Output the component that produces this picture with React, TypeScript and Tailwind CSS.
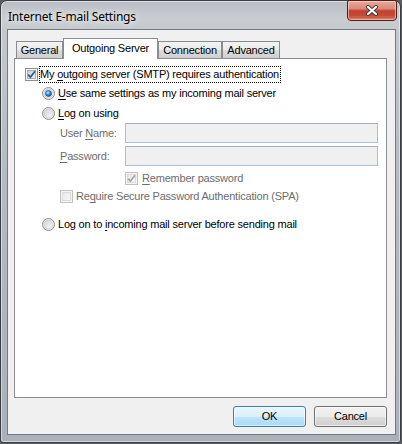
import React, { useId } from "react";

function Checkbox({ checked, disabled }: { checked?: boolean; disabled?: boolean }) {
  const id = useId().replace(/:/g, "");
  return (
    <svg width="13" height="13" viewBox="0 0 13 13" className="shrink-0 block">
      <defs>
        <linearGradient id={`cg${id}`} x1="0" y1="0" x2="1" y2="1">
          <stop offset="0" stopColor={disabled ? "#e6e6e6" : "#c5cad1"} />
          <stop offset="1" stopColor={disabled ? "#f9f9f9" : "#f7f7f8"} />
        </linearGradient>
      </defs>
      <rect x="0.5" y="0.5" width="12" height="12" fill="#f4f4f4" stroke={disabled ? "#c2c2c2" : "#8e8f8f"} />
      <rect x="2.5" y="2.5" width="8" height="8" fill={`url(#cg${id})`} stroke={disabled ? "#dcdcdc" : "#a7acb3"} />
      {checked && (
        <path
          d="M3.2 6.6 L5.4 9.2 L10 3.2"
          fill="none"
          stroke={disabled ? "#a6a6a6" : "#3c5a8e"}
          strokeWidth="1.8"
          strokeLinejoin="round"
        />
      )}
    </svg>
  );
}

function Radio({ checked }: { checked?: boolean }) {
  const id = useId().replace(/:/g, "");
  return (
    <svg width="13" height="13" viewBox="0 0 13 13" className="shrink-0 block">
      <defs>
        <linearGradient id={`rg${id}`} x1="0" y1="0" x2="1" y2="1">
          <stop offset="0" stopColor="#cfd1d4" />
          <stop offset="1" stopColor="#fbfbfb" />
        </linearGradient>
        <radialGradient id={`rd${id}`} cx="0.4" cy="0.35" r="0.7">
          <stop offset="0" stopColor="#c4ecff" />
          <stop offset="0.45" stopColor="#3f9ae0" />
          <stop offset="1" stopColor="#0d3f78" />
        </radialGradient>
      </defs>
      <circle cx="6.5" cy="6.5" r="6" fill="#f2f2f2" stroke="#8e8f8f" />
      <circle cx="6.5" cy="6.5" r="4.6" fill={`url(#rg${id})`} stroke="#b9bcc0" strokeWidth="0.6" />
      {checked && <circle cx="6.5" cy="6.5" r="3" fill={`url(#rd${id})`} stroke="#1a4a7c" strokeWidth="0.6" />}
    </svg>
  );
}

function U({ children }: { children: React.ReactNode }) {
  return <span className="underline decoration-1 underline-offset-[2px]">{children}</span>;
}

function CloseButton() {
  return (
    <div className="-mt-px mr-[3px] w-[50px] h-[21px] rounded-b-[4px] rounded-t-[2px] border border-[#4b1f1a] bg-[linear-gradient(180deg,#e9a99a_0%,#dc8a7a_40%,#c2412f_52%,#c44a36_75%,#dd7b62_100%)] shadow-[inset_0_0_0_1px_rgba(255,230,220,0.55)] flex items-center justify-center">
      <svg width="14" height="11" viewBox="0 0 14 11" className="block">
        <path d="M3 2 L11 9 M11 2 L3 9" stroke="#3a3a3a" strokeWidth="4" strokeLinecap="round" />
        <path d="M3 2 L11 9 M11 2 L3 9" stroke="#ffffff" strokeWidth="2.2" strokeLinecap="round" />
      </svg>
    </div>
  );
}

const tabBase =
  "h-[17px] border border-b-0 border-[#898c95] bg-[linear-gradient(180deg,#f2f2f2_0%,#ebebeb_50%,#dddddd_51%,#cfcfcf_100%)] flex items-center justify-center pt-px";

export default function App() {
  return (
    <div className="w-[402px] h-[444px] bg-[#5b5f63] overflow-hidden font-['Liberation_Sans',Arial,sans-serif] text-[11px] tracking-[-0.2px] text-black">
      <div className="w-[401px] h-[443px] rounded-t-[7px] rounded-b-[3px] border border-[#3a3e43] bg-[linear-gradient(180deg,#b9bec4_0%,#c9cdd2_4%,#c3c8cd_7%,#b4bac1_40%,#aab1b8_100%)] shadow-[inset_0_0_0_1px_rgba(255,255,255,0.5)] flex flex-col">
        <div className="h-[28px] flex items-start justify-between">
          <div className="pl-[7px] pt-[7px] text-[12px] tracking-[-0.2px] font-['Noto_Sans','Open_Sans',sans-serif] [text-shadow:0_0_6px_rgba(255,255,255,0.95),0_0_10px_rgba(255,255,255,0.8)]">
            Internet E-mail Settings
          </div>
          <CloseButton />
        </div>
        <div className="ml-[6px] w-[389px] h-[406px] border border-[#737a83] bg-[#f0f0f0] flex flex-col">
          <div className="pt-[8px] pl-[8px] flex items-end h-[28px] relative z-10">
            <div className={`${tabBase} w-[47px]`}>General</div>
            <div className="w-[95px] h-[21px] -mb-px border border-b-0 border-[#898c95] bg-white flex items-center justify-center pb-px">
              Outgoing Server
            </div>
            <div className={`${tabBase} w-[64px]`}>Connection</div>
            <div className={`${tabBase} w-[58px]`}>Advanced</div>
          </div>
          <div className="ml-[6px] w-[373px] h-[340px] border border-[#898c95] bg-white flex flex-col pt-[7px]">
            <div className="h-[17px] flex items-center ml-[10px]">
              <Checkbox checked />
              <div className="ml-[1px] h-[17px] flex items-center border border-dotted border-black pl-0 pr-[1px]">
                <span>
                  My <U>o</U>utgoing server (SMTP) requires authentication
                </span>
              </div>
            </div>
            <div className="h-[17px] mt-[2px] flex items-center ml-[27px] gap-[3px]">
              <Radio checked />
              <span>
                <U>U</U>se same settings as my incoming mail server
              </span>
            </div>
            <div className="h-[17px] mt-[3px] flex items-center ml-[27px] gap-[3px]">
              <Radio />
              <span>
                <U>L</U>og on using
              </span>
            </div>
            <div className="h-[20px] mt-[1px] flex items-center ml-[45px]">
              <span className="w-[65px] text-[#6d6d6d]">
                User <U>N</U>ame:
              </span>
              <div className="w-[253px] h-[20px] border border-[#abbfd8] border-t-[#9fb0c6] bg-[#f0f0f0]" />
            </div>
            <div className="h-[20px] mt-[3px] flex items-center ml-[45px]">
              <span className="w-[65px] text-[#6d6d6d]">
                <U>P</U>assword:
              </span>
              <div className="w-[253px] h-[20px] border border-[#abbfd8] border-t-[#9fb0c6] bg-[#f0f0f0]" />
            </div>
            <div className="h-[17px] mt-[4px] flex items-center ml-[110px] gap-[4px] text-[#6d6d6d]">
              <Checkbox checked disabled />
              <span>
                <U>R</U>emember password
              </span>
            </div>
            <div className="h-[17px] mt-[1px] flex items-center ml-[45px] gap-[3px] text-[#6d6d6d]">
              <Checkbox disabled />
              <span>
                Re<U>q</U>uire Secure Password Authentication (SPA)
              </span>
            </div>
            <div className="h-[17px] mt-[11px] flex items-center ml-[27px] gap-[3px]">
              <Radio />
              <span>
                Log on to <U>i</U>ncoming mail server before sending mail
              </span>
            </div>
          </div>
          <div className="ml-[6px] w-[373px] mt-[8px] flex justify-end gap-[8px]">
            <div className="w-[73px] h-[21px] rounded-[3px] border border-[#3c7fb1] bg-[linear-gradient(180deg,#eaf6fd_0%,#d9f0fc_50%,#bee6fd_51%,#a7d9f5_100%)] shadow-[inset_0_0_0_1px_rgba(255,255,255,0.6)] flex items-center justify-center">
              OK
            </div>
            <div className="w-[73px] h-[21px] rounded-[3px] border border-[#707070] bg-[linear-gradient(180deg,#f2f2f2_0%,#ebebeb_50%,#dddddd_51%,#cfcfcf_100%)] shadow-[inset_0_0_0_1px_rgba(255,255,255,0.6)] flex items-center justify-center">
              Cancel
            </div>
          </div>
        </div>
      </div>
    </div>
  );
}
